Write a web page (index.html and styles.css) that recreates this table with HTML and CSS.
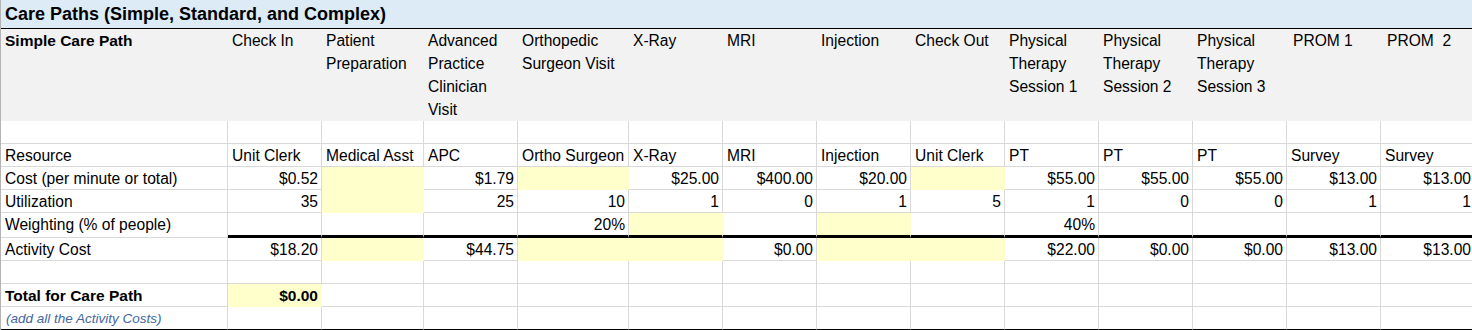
FILE: index.html
```html
<!DOCTYPE html>
<html lang="en">
<head>
<meta charset="utf-8">
<title>Care Paths</title>
<link rel="stylesheet" href="styles.css">
</head>
<body>
<div class="sheet">
  <div class="title">Care Paths (Simple, Standard, and Complex)</div>

  <div class="hd hd-a">Simple Care Path</div>
  <div class="hd">Check In</div>
  <div class="hd">Patient<br>Preparation</div>
  <div class="hd">Advanced<br>Practice<br>Clinician<br>Visit</div>
  <div class="hd">Orthopedic<br>Surgeon Visit</div>
  <div class="hd">X-Ray</div>
  <div class="hd">MRI</div>
  <div class="hd">Injection</div>
  <div class="hd">Check Out</div>
  <div class="hd">Physical<br>Therapy<br>Session 1</div>
  <div class="hd">Physical<br>Therapy<br>Session 2</div>
  <div class="hd">Physical<br>Therapy<br>Session 3</div>
  <div class="hd prom">PROM 1</div>
  <div class="hd prom">PROM&nbsp; 2</div>

  <div class="c"></div><div class="c"></div><div class="c"></div><div class="c"></div><div class="c"></div><div class="c"></div><div class="c"></div><div class="c"></div><div class="c"></div><div class="c"></div><div class="c"></div><div class="c"></div><div class="c"></div><div class="c"></div>

  <div class="c">Resource</div>
  <div class="c">Unit Clerk</div>
  <div class="c">Medical Asst</div>
  <div class="c">APC</div>
  <div class="c">Ortho Surgeon</div>
  <div class="c">X-Ray</div>
  <div class="c">MRI</div>
  <div class="c">Injection</div>
  <div class="c">Unit Clerk</div>
  <div class="c">PT</div>
  <div class="c">PT</div>
  <div class="c">PT</div>
  <div class="c">Survey</div>
  <div class="c">Survey</div>

  <div class="c">Cost (per minute or total)</div>
  <div class="c r">$0.52</div>
  <div class="c y"></div>
  <div class="c r">$1.79</div>
  <div class="c y"></div>
  <div class="c r">$25.00</div>
  <div class="c r">$400.00</div>
  <div class="c r">$20.00</div>
  <div class="c y"></div>
  <div class="c r">$55.00</div>
  <div class="c r">$55.00</div>
  <div class="c r">$55.00</div>
  <div class="c r">$13.00</div>
  <div class="c r">$13.00</div>

  <div class="c">Utilization</div>
  <div class="c r">35</div>
  <div class="c y"></div>
  <div class="c r">25</div>
  <div class="c r">10</div>
  <div class="c r">1</div>
  <div class="c r">0</div>
  <div class="c r">1</div>
  <div class="c r">5</div>
  <div class="c r">1</div>
  <div class="c r">0</div>
  <div class="c r">0</div>
  <div class="c r">1</div>
  <div class="c r">1</div>

  <div class="c">Weighting (% of people)</div>
  <div class="c w"></div>
  <div class="c w"></div>
  <div class="c w"></div>
  <div class="c w r">20%</div>
  <div class="c w y"></div>
  <div class="c w"></div>
  <div class="c w y"></div>
  <div class="c w"></div>
  <div class="c w r">40%</div>
  <div class="c w"></div>
  <div class="c w"></div>
  <div class="c w"></div>
  <div class="c w"></div>

  <div class="c">Activity Cost</div>
  <div class="c r">$18.20</div>
  <div class="c y"></div>
  <div class="c r">$44.75</div>
  <div class="c y"></div>
  <div class="c y"></div>
  <div class="c r">$0.00</div>
  <div class="c y"></div>
  <div class="c y"></div>
  <div class="c r">$22.00</div>
  <div class="c r">$0.00</div>
  <div class="c r">$0.00</div>
  <div class="c r">$13.00</div>
  <div class="c r">$13.00</div>

  <div class="c"></div><div class="c"></div><div class="c"></div><div class="c"></div><div class="c"></div><div class="c"></div><div class="c"></div><div class="c"></div><div class="c"></div><div class="c"></div><div class="c"></div><div class="c"></div><div class="c"></div><div class="c"></div>

  <div class="c b">Total for Care Path</div>
  <div class="c r b y">$0.00</div>
  <div class="c"></div><div class="c"></div><div class="c"></div><div class="c"></div><div class="c"></div><div class="c"></div><div class="c"></div><div class="c"></div><div class="c"></div><div class="c"></div><div class="c"></div><div class="c"></div>

  <div class="c last note">(add all the Activity Costs)</div>
  <div class="c last"></div><div class="c last"></div><div class="c last"></div><div class="c last"></div><div class="c last"></div><div class="c last"></div><div class="c last"></div><div class="c last"></div><div class="c last"></div><div class="c last"></div><div class="c last"></div><div class="c last"></div><div class="c last"></div>
</div>
</body>
</html>
```

FILE: styles.css
```css
html, body {
  margin: 0;
  padding: 0;
  background: #ffffff;
  overflow: hidden;
}

body {
  font-family: "Liberation Sans", Arial, sans-serif;
  font-size: 15.6px;
  color: #000000;
}

.sheet {
  display: grid;
  grid-template-columns: 227px 94px 102px 94px 111px repeat(9, 94px);
  grid-template-rows: 29px 92px 23px 23px 23px 23px 25px 23px 23px 23px 23px;
  border-left: 1px solid #b4b4b4;
  width: max-content;
}

.title {
  grid-column: 1 / -1;
  background: #ddebf7;
  border-bottom: 1px solid #000000;
  font-weight: bold;
  font-size: 18px;
  line-height: 28px;
  padding-left: 4px;
  white-space: nowrap;
}

.hd {
  background: #f2f2f2;
  padding: 0 4px;
  line-height: 23px;
  white-space: nowrap;
}

.hd-a {
  font-weight: bold;
  font-size: 15.5px;
}

.prom {
  padding-left: 6px;
}

.c {
  box-sizing: border-box;
  border-right: 1px solid #d9d9d9;
  border-bottom: 1px solid #d9d9d9;
  padding: 1px 4px 0 4px;
  line-height: 22px;
  white-space: nowrap;
}

.r {
  text-align: right;
  padding-right: 3px;
}

.b {
  font-weight: bold;
  font-size: 15.5px;
}

.y {
  background: #ffffcc;
  border-right-color: #ffffcc;
  border-bottom-color: #ffffcc;
}

.w {
  border-bottom: 3px solid #000000;
}

.last {
  border-bottom-color: #000000;
}

.note {
  font-style: italic;
  font-size: 13.5px;
  color: #44679f;
  padding-left: 5px;
  line-height: 21px;
}
```
